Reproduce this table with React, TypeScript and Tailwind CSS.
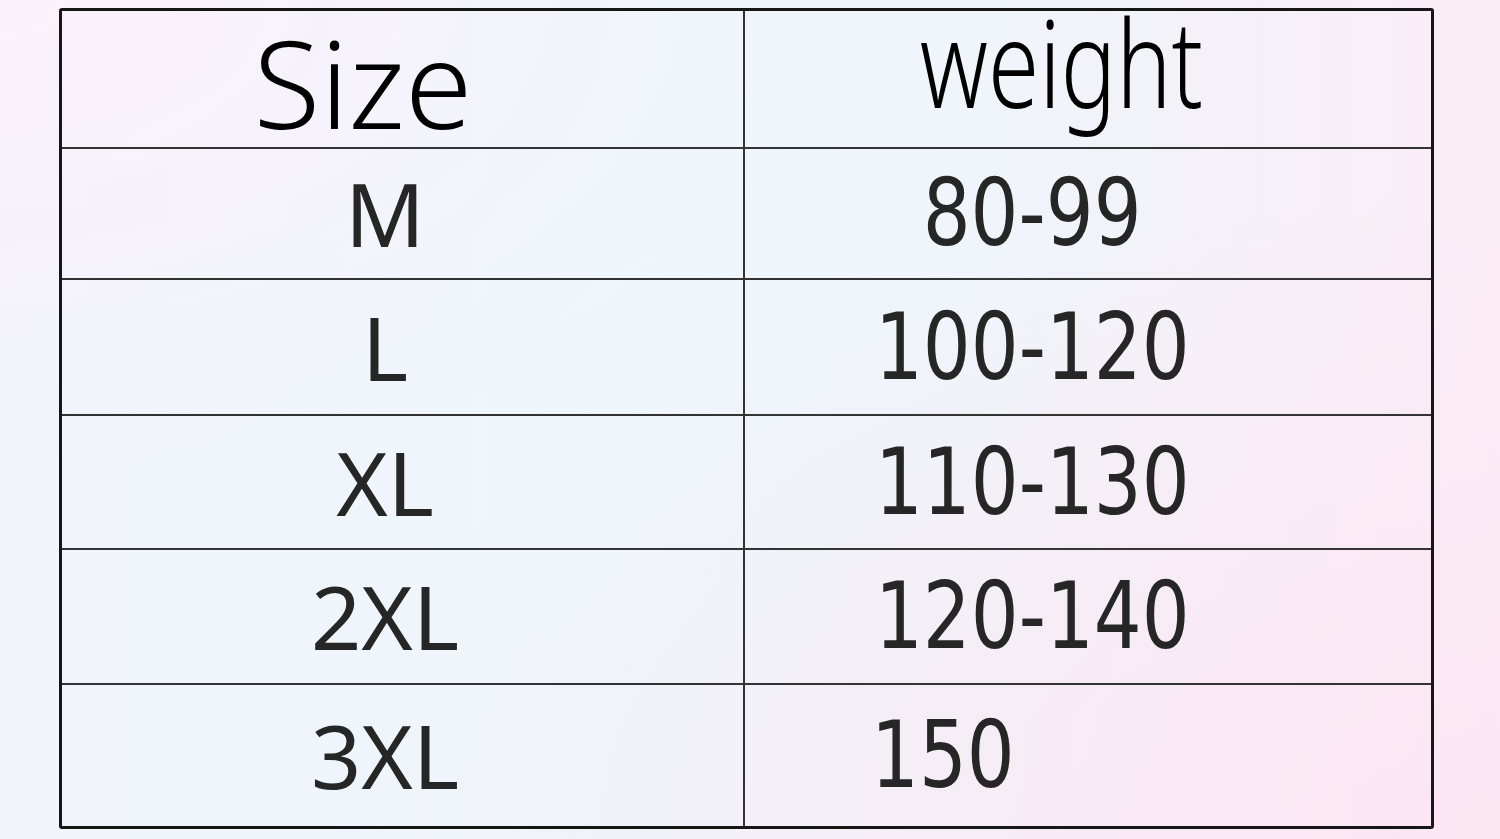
const rows = [
  { size: "M", weight: "80-99", h: "h-[131px]" },
  { size: "L", weight: "100-120", h: "h-[136px]" },
  { size: "XL", weight: "110-130", h: "h-[134px]" },
  { size: "2XL", weight: "120-140", h: "h-[135px]" },
];

const letterFont = "font-['Noto_Sans',sans-serif]";
const numFont = "font-['DejaVu_Sans',sans-serif]";

export default function App() {
  return (
    <div className="w-[1500px] h-[839px] overflow-hidden pl-[59px] pt-[8px] bg-[radial-gradient(ellipse_at_top_left,#fbf1fb_0%,transparent_40%),radial-gradient(ellipse_at_bottom_right,#fbe6f2_0%,transparent_55%),linear-gradient(to_right,#f1f4fb_0%,#eef6fc_40%,#eff5fb_65%,#fbedf6_100%)]">
      <div className="w-[1375px] h-[821px] border-[3px] border-[#161616] rounded-[3px] flex flex-col text-[#262626]">
        {/* header */}
        <div className="flex h-[138px] border-b-2 border-[#333]">
          <div className={`w-[683px] border-r-2 border-[#333] flex items-start justify-center pr-[79px] pt-[23px] text-black ${letterFont}`}>
            <span className="text-[122px] font-light leading-[0.8]">Size</span>
          </div>
          <div className={`flex-1 flex items-start justify-center pr-[54px] pt-[2px] text-black ${letterFont}`}>
            <span className="inline-block text-[122px] font-light leading-[0.8] scale-x-[0.76]">weight</span>
          </div>
        </div>

        {rows.map((r) => (
          <div key={r.size} className={`flex ${r.h} border-b-2 border-[#333]`}>
            <div className={`w-[683px] border-r-2 border-[#333] flex items-center justify-center pr-[35px] ${letterFont}`}>
              <span className="text-[88px] leading-[0.8]">{r.size}</span>
            </div>
            <div className={`flex-1 flex items-center justify-center pr-[112px] ${numFont}`}>
              <span className="inline-block text-[93px] leading-[0.8] scale-x-[0.81]">{r.weight}</span>
            </div>
          </div>
        ))}

        <div className="flex flex-1">
          <div className={`w-[683px] border-r-2 border-[#333] flex items-center justify-center pr-[35px] ${letterFont}`}>
            <span className="text-[88px] leading-[0.8]">3XL</span>
          </div>
          <div className={`flex-1 flex items-center pl-[126px] ${numFont}`}>
            <span className="inline-block text-[93px] leading-[0.8] origin-left scale-x-[0.81]">150</span>
          </div>
        </div>
      </div>
    </div>
  );
}
